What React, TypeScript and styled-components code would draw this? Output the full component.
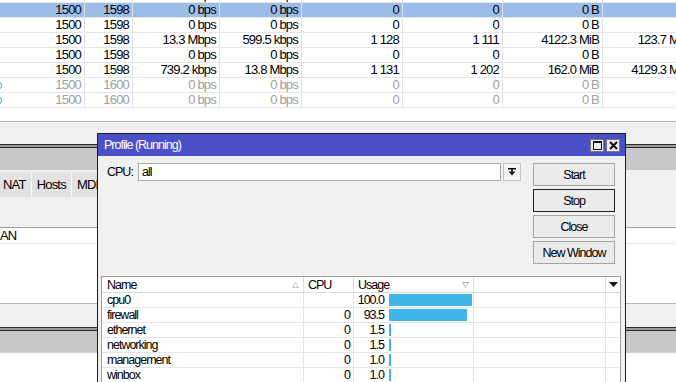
import React from 'react';
import styled, { createGlobalStyle } from 'styled-components';

const FONT = `"Liberation Sans", Arial, sans-serif`;

const GlobalStyle = createGlobalStyle`
  html, body {
    margin: 0;
    padding: 0;
    background: #ffffff;
  }
  body {
    font-family: ${FONT};
  }
  * {
    box-sizing: border-box;
  }
`;

type TrafficRowData = { values: string[]; selected?: boolean; disabled?: boolean };

const trafficCols = [85, 48, 87, 82, 101, 100, 100, 90];

const trafficRows: TrafficRowData[] = [
  { values: ['1500', '1598', '0 bps', '0 bps', '0', '0', '0 B', ''] },
  { values: ['1500', '1598', '0 bps', '0 bps', '0', '0', '0 B', ''], selected: true },
  { values: ['1500', '1598', '0 bps', '0 bps', '0', '0', '0 B', ''] },
  { values: ['1500', '1598', '13.3 Mbps', '599.5 kbps', '1 128', '1 111', '4122.3 MiB', '123.7 MiB'] },
  { values: ['1500', '1598', '0 bps', '0 bps', '0', '0', '0 B', ''] },
  { values: ['1500', '1598', '739.2 kbps', '13.8 Mbps', '1 131', '1 202', '162.0 MiB', '4129.3 MiB'] },
  { values: ['1500', '1600', '0 bps', '0 bps', '0', '0', '0 B', ''], disabled: true },
  { values: ['1500', '1600', '0 bps', '0 bps', '0', '0', '0 B', ''], disabled: true },
];

const profileRows = [
  { name: 'cpu0', cpu: '', usage: 100.0 },
  { name: 'firewall', cpu: '0', usage: 93.5 },
  { name: 'ethernet', cpu: '0', usage: 1.5 },
  { name: 'networking', cpu: '0', usage: 1.5 },
  { name: 'management', cpu: '0', usage: 1.0 },
  { name: 'winbox', cpu: '0', usage: 1.0 },
  { name: 'profiling', cpu: '0', usage: 0.5 },
];

const BAR_MAX = 83;

export default function App() {
  return (
    <>
      <GlobalStyle />
      <Screen>
        {/* interface list behind the window */}
        <TrafficTable>
          {trafficRows.map((row, i) => (
            <TrafficRow key={i} $selected={row.selected} $disabled={row.disabled}>
              {row.values.map((v, j) => (
                <TrafficCell key={j} $w={trafficCols[j]}>
                  {j === 0 && row.disabled && <Flag />}
                  {v}
                </TrafficCell>
              ))}
            </TrafficRow>
          ))}
        </TrafficTable>
        <WhiteGap />
        <StatusStrip />
        <Splitter />
        <TitleBand />
        <TabRow>
          <Tab $first>NAT</Tab>
          <Tab>Hosts</Tab>
          <Tab>MDB</Tab>
        </TabRow>
        <ToolArea />
        <ListArea>
          <ListRow>AN</ListRow>
        </ListArea>
        <StatusStrip $short />
        <Splitter />
        <TitleBand $short />
        <BottomArea />

        {/* the profile window */}
        <Window>
          <TitleBar>
            <span>Profile (Running)</span>
            <TitleButtons>
              <TitleButton>
                <svg width="9" height="9" viewBox="0 0 9 9">
                  <rect x="0.5" y="0.5" width="8" height="8" fill="none" stroke="#111" />
                  <rect x="0" y="0" width="9" height="2" fill="#111" />
                </svg>
              </TitleButton>
              <TitleButton>
                <svg width="9" height="9" viewBox="0 0 9 9">
                  <path d="M1 1 L8 8 M8 1 L1 8" stroke="#111" strokeWidth="2" />
                </svg>
              </TitleButton>
            </TitleButtons>
          </TitleBar>
          <Body>
            <Controls>
              <CpuField>
                <FieldLabel>CPU:</FieldLabel>
                <TextInput>all</TextInput>
                <DropButton>
                  <svg width="8" height="8" viewBox="0 0 8 8">
                    <rect x="0" y="0" width="8" height="1.6" fill="#111" />
                    <rect x="3" y="1.6" width="2" height="2" fill="#111" />
                    <polygon points="0.5,3.4 7.5,3.4 4,7.6" fill="#111" />
                  </svg>
                </DropButton>
              </CpuField>
              <ButtonStack>
                <ActionButton>Start</ActionButton>
                <ActionButton $focused>Stop</ActionButton>
                <ActionButton>Close</ActionButton>
                <ActionButton>New Window</ActionButton>
              </ButtonStack>
            </Controls>
            <ProfileTable>
              <HeaderRow>
                <HeaderCell $pad={5}>
                  Name
                  <SortMark>
                    <svg width="7" height="6" viewBox="0 0 7 6">
                      <polygon points="3.5,0.5 6.5,5.5 0.5,5.5" fill="none" stroke="#c4c4c4" />
                    </svg>
                  </SortMark>
                </HeaderCell>
                <HeaderCell>CPU</HeaderCell>
                <HeaderCell>
                  Usage
                  <SortMark>
                    <svg width="7" height="6" viewBox="0 0 7 6">
                      <polygon points="0.5,0.5 6.5,0.5 3.5,5.5" fill="none" stroke="#b4b4b4" />
                    </svg>
                  </SortMark>
                </HeaderCell>
                <HeaderCell />
                <MenuCell>
                  <svg width="9" height="5" viewBox="0 0 9 5">
                    <polygon points="0,0 9,0 4.5,5" fill="#111" />
                  </svg>
                </MenuCell>
              </HeaderRow>
              {profileRows.map((r) => (
                <DataRow key={r.name}>
                  <NameCell>{r.name}</NameCell>
                  <NumCell>{r.cpu}</NumCell>
                  <UsageCell>
                    <UsageValue>{r.usage.toFixed(1)}</UsageValue>
                    <UsageBar style={{ width: Math.max(2, Math.round((r.usage / 100) * BAR_MAX)) }} />
                  </UsageCell>
                  <BlankCell />
                  <BlankCell $last />
                </DataRow>
              ))}
            </ProfileTable>
          </Body>
        </Window>
      </Screen>
    </>
  );
}

const Screen = styled.div`
  position: relative;
  width: 676px;
  height: 382px;
  overflow: hidden;
  background: #ffffff;
  display: flex;
  flex-direction: column;
`;

const TrafficTable = styled.div`
  margin-top: -12px;
  font-size: 13px;
  letter-spacing: -0.8px;
  flex: 0 0 auto;
`;

const TrafficRow = styled.div<{ $selected?: boolean; $disabled?: boolean }>`
  display: flex;
  height: 15px;
  border-bottom: 1px solid #e6e6e6;
  background: ${(p) => (p.$selected ? '#9dbde9' : '#ffffff')};
  color: ${(p) => (p.$disabled ? '#a0a0a0' : '#000000')};
`;

const TrafficCell = styled.div<{ $w: number }>`
  flex: 0 0 ${(p) => p.$w}px;
  display: flex;
  justify-content: flex-end;
  align-items: center;
  position: relative;
  padding-right: 3px;
  border-right: 1px solid #e2e2e2;
  white-space: nowrap;
  line-height: 14px;
`;

const Flag = styled.span`
  position: absolute;
  left: -4px;
  top: 4px;
  width: 6px;
  height: 7px;
  border: 1px solid #6a9ee0;
  border-radius: 50%;
`;

const WhiteGap = styled.div`
  height: 13px;
  flex: 0 0 auto;
`;

const StatusStrip = styled.div<{ $short?: boolean }>`
  flex: 0 0 auto;
  height: ${(p) => (p.$short ? 24 : 23)}px;
  background: #f0f0f0;
  border-top: 1px solid #b8b8b8;
`;

const Splitter = styled.div`
  flex: 0 0 auto;
  height: 4px;
  border-top: 1px solid #2c2c2c;
  border-bottom: 1px solid #2c2c2c;
  background: #9a9a9a;
`;

const TitleBand = styled.div<{ $short?: boolean }>`
  flex: 0 0 auto;
  height: ${(p) => (p.$short ? 21 : 22)}px;
  background: #c8c8c8;
`;

const TabRow = styled.div`
  flex: 0 0 auto;
  height: 28px;
  padding-top: 2px;
  background: #f0f0f0;
  display: flex;
  font-size: 13px;
  letter-spacing: -0.8px;
`;

const Tab = styled.div<{ $first?: boolean }>`
  height: 25px;
  display: flex;
  align-items: center;
  padding: 0 5px;
  margin-left: ${(p) => (p.$first ? '-2px' : '0')};
  background: #e2e2e2;
  border-right: 1px solid #fafafa;
  color: #000;
`;

const ToolArea = styled.div`
  flex: 0 0 auto;
  height: 29px;
  background: #f0f0f0;
`;

const ListArea = styled.div`
  flex: 0 0 auto;
  height: 76px;
  background: #ffffff;
  border-top: 1px solid #a0a0a0;
  font-size: 13px;
  letter-spacing: -0.8px;
`;

const ListRow = styled.div`
  height: 16px;
  line-height: 15px;
  border-bottom: 1px solid #e4e4e4;
`;

const BottomArea = styled.div`
  flex: 1;
  background: #ffffff;
  border-top: 1px solid #d0d0d0;
`;

const Window = styled.div`
  position: absolute;
  left: 97px;
  top: 133px;
  width: 529px;
  height: 262px;
  border: 1px solid #1c1c1c;
  background: #f0f0f0;
  display: flex;
  flex-direction: column;
  font-size: 12.5px;
  letter-spacing: -1px;
  color: #000;
`;

const TitleBar = styled.div`
  flex: 0 0 22px;
  background: #4b50c8;
  color: #ffffff;
  display: flex;
  align-items: center;
  justify-content: space-between;
  padding: 0 5px 0 6px;
  font-size: 12.5px;
`;

const TitleButtons = styled.div`
  display: flex;
  gap: 2px;
  margin-top: 1px;
`;

const TitleButton = styled.div`
  width: 14px;
  height: 13px;
  background: #ececec;
  border: 1px solid #7a7a7a;
  display: flex;
  align-items: center;
  justify-content: center;
`;

const Body = styled.div`
  flex: 1;
  display: flex;
  flex-direction: column;
  padding: 7px 4px 0 3px;
  min-height: 0;
`;

const Controls = styled.div`
  display: flex;
  gap: 12px;
  padding: 0 6px;
`;

const CpuField = styled.div`
  flex: 1;
  display: flex;
  align-items: flex-start;
`;

const FieldLabel = styled.div`
  width: 31px;
  height: 18px;
  line-height: 18px;
`;

const TextInput = styled.div`
  flex: 1;
  height: 18px;
  line-height: 16px;
  padding-left: 3px;
  background: #ffffff;
  border: 1px solid #a8a8a8;
`;

const DropButton = styled.div`
  width: 18px;
  height: 18px;
  margin-left: 2px;
  border: 1px solid #c4c4c4;
  background: #f4f4f4;
  display: flex;
  align-items: center;
  justify-content: center;
`;

const ButtonStack = styled.div`
  display: flex;
  flex-direction: column;
  gap: 3px;
`;

const ActionButton = styled.div<{ $focused?: boolean }>`
  width: 82px;
  height: 23px;
  display: flex;
  align-items: center;
  justify-content: center;
  background: #ebebeb;
  border: 1px solid ${(p) => (p.$focused ? '#1e1e1e' : '#a4a4a4')};
`;

const ProfileTable = styled.div`
  margin-top: 12px;
  flex: 1;
  background: #ffffff;
  border: 1px solid #a0a0a0;
  border-bottom: none;
`;

const HeaderRow = styled.div`
  display: grid;
  grid-template-columns: 202px 50px 120px 132px 1fr;
  height: 16px;
  border-bottom: 1px solid #dadada;
`;

const HeaderCell = styled.div<{ $pad?: number }>`
  display: flex;
  align-items: center;
  justify-content: space-between;
  padding-left: ${(p) => p.$pad ?? 4}px;
  padding-right: 4px;
  border-right: 1px solid #dcdcdc;
`;

const SortMark = styled.span`
  display: flex;
  align-items: center;
`;

const MenuCell = styled.div`
  display: flex;
  align-items: center;
  justify-content: center;
`;

const DataRow = styled.div`
  display: grid;
  grid-template-columns: 202px 50px 120px 132px 1fr;
  height: 15px;
  border-bottom: 1px solid #e6e6e6;
  line-height: 14px;
`;

const NameCell = styled.div`
  padding-left: 5px;
  border-right: 1px solid #e2e2e2;
  white-space: nowrap;
`;

const NumCell = styled.div`
  text-align: right;
  padding-right: 3px;
  border-right: 1px solid #e2e2e2;
`;

const UsageCell = styled.div`
  display: flex;
  align-items: center;
  border-right: 1px solid #e2e2e2;
`;

const UsageValue = styled.div`
  width: 31px;
  text-align: right;
  padding-right: 1px;
`;

const UsageBar = styled.div`
  height: 12px;
  margin-left: 4px;
  background: #40b5e9;
`;

const BlankCell = styled.div<{ $last?: boolean }>`
  border-right: ${(p) => (p.$last ? 'none' : '1px solid #e2e2e2')};
`;
